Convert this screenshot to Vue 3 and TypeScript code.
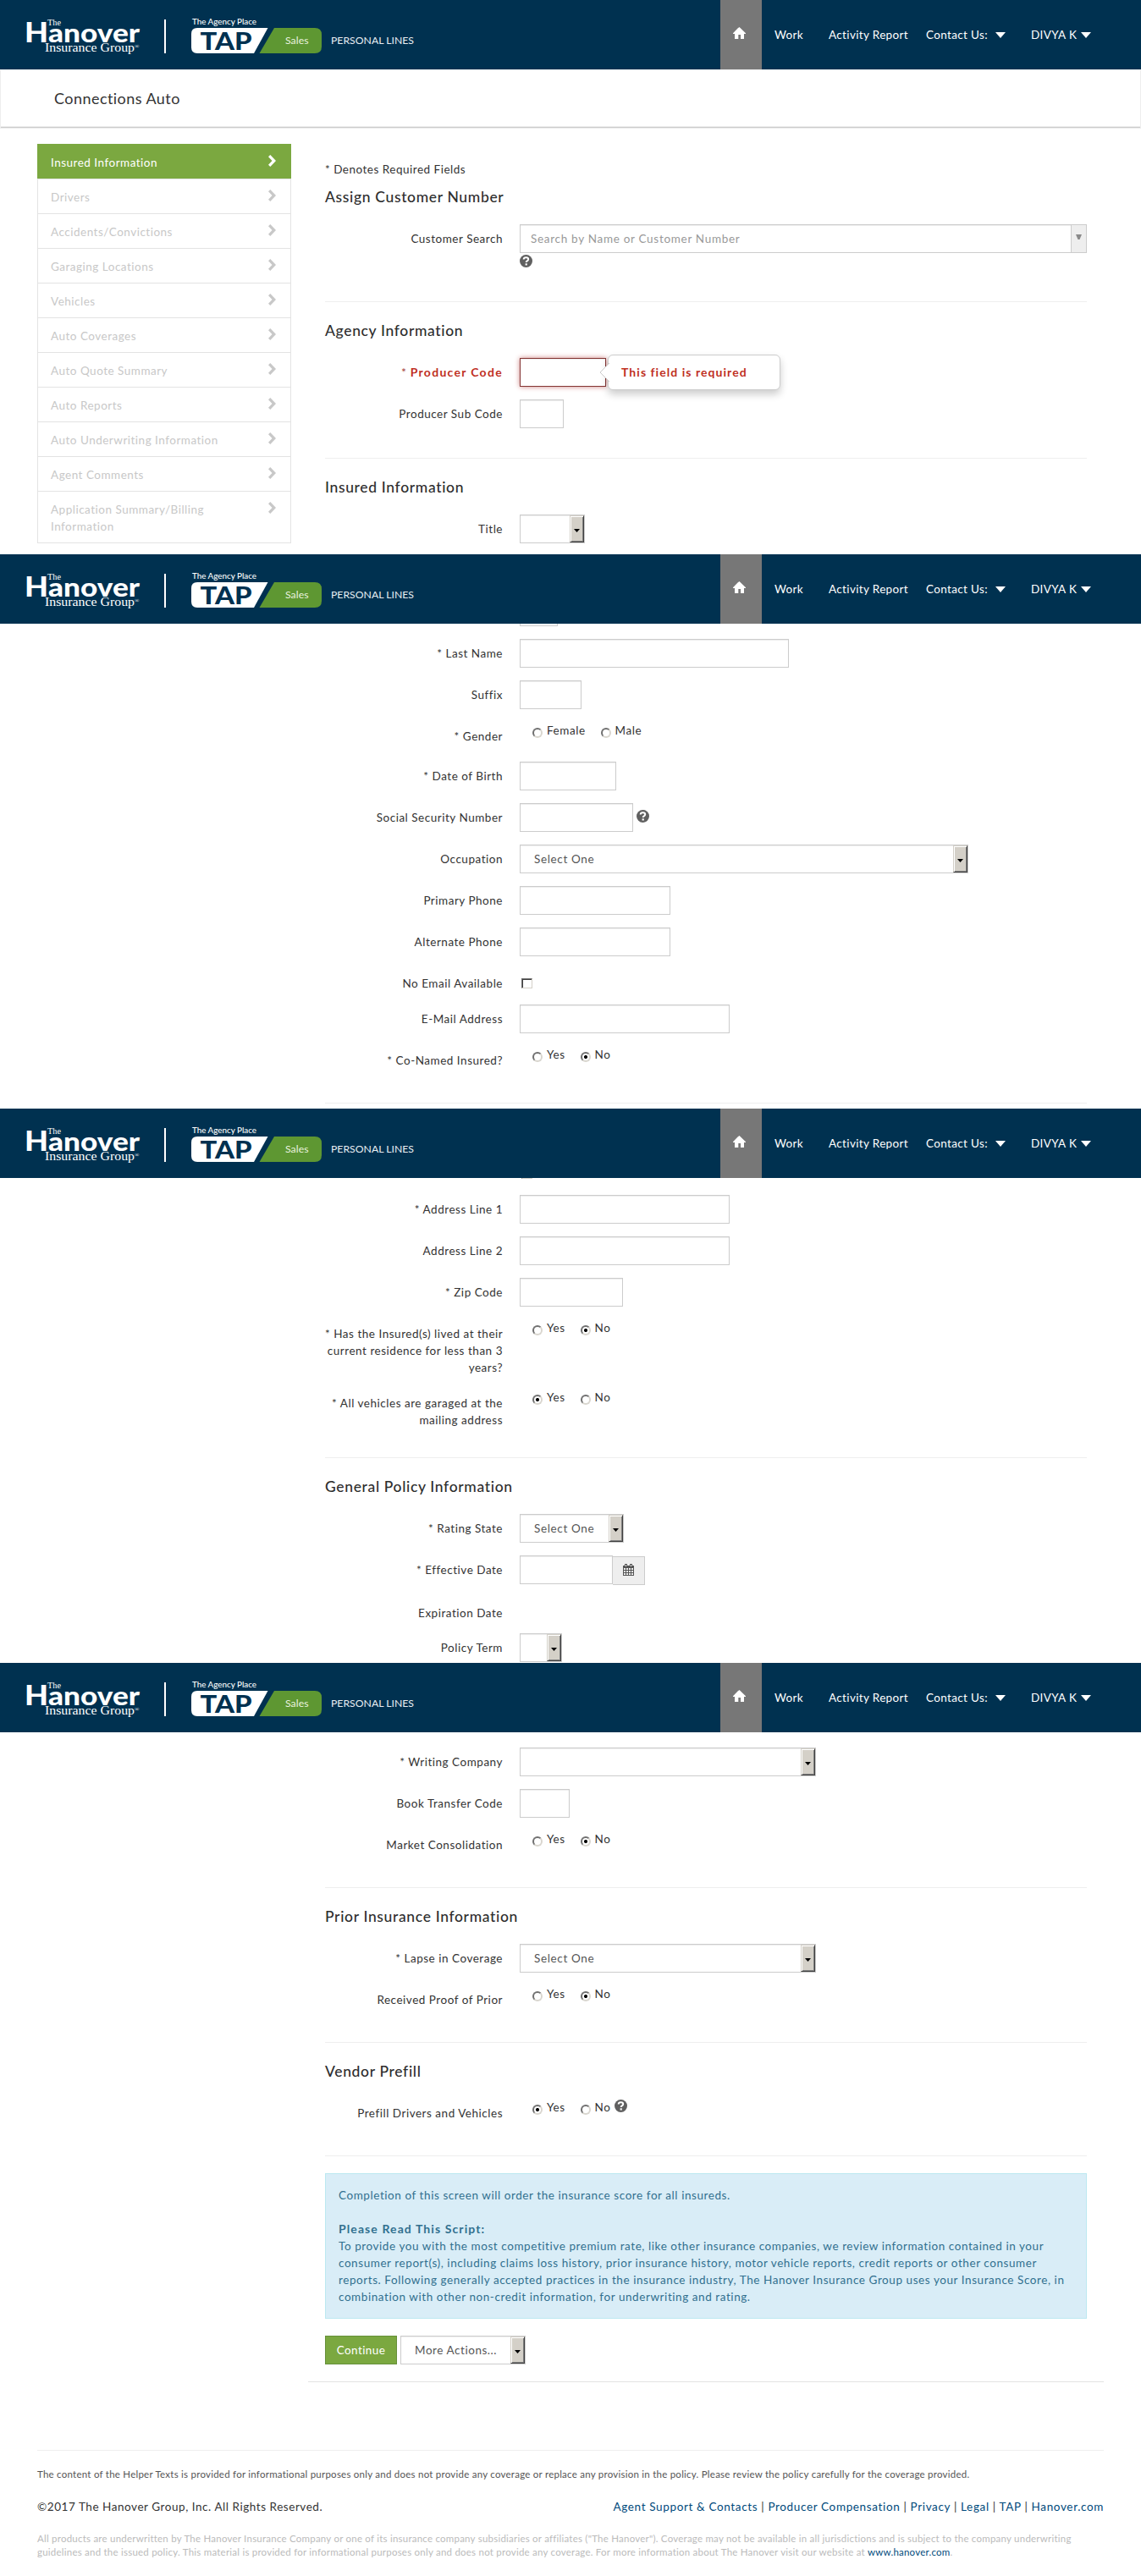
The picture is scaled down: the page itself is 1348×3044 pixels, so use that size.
<script setup lang="ts">
interface Option {
  text: string
  on?: boolean
}

interface Row {
  label?: string
  required?: boolean
  h: number
  kind: 'input' | 'select' | 'radio' | 'check' | 'search' | 'date' | 'none'
  w?: number
  value?: string
  options?: Option[]
  help?: boolean
  error?: string
}

interface Section {
  title?: string
  rows: Row[]
  rule?: boolean
}

interface Screen {
  name: string
  sections: Section[]
}

const steps: string[] = [
  'Insured Information',
  'Drivers',
  'Accidents/Convictions',
  'Garaging Locations',
  'Vehicles',
  'Auto Coverages',
  'Auto Quote Summary',
  'Auto Reports',
  'Auto Underwriting Information',
  'Agent Comments',
  'Application Summary/Billing\nInformation',
]

const yesNo = (yes: boolean): Option[] => [
  { text: 'Yes', on: yes },
  { text: 'No', on: !yes },
]

const screens: Screen[] = [
  {
    name: 'first',
    sections: [
      {
        title: 'Assign Customer Number',
        rule: true,
        rows: [{ label: 'Customer Search', h: 71, kind: 'search', w: 670, value: 'Search by Name or Customer Number', help: true }],
      },
      {
        title: 'Agency Information',
        rule: true,
        rows: [
          { label: 'Producer Code', required: true, h: 49, kind: 'input', w: 102, error: 'This field is required' },
          { label: 'Producer Sub Code', h: 49, kind: 'input', w: 52 },
        ],
      },
      {
        title: 'Insured Information',
        rows: [{ label: 'Title', h: 49, kind: 'select', w: 77 }],
      },
    ],
  },
  {
    name: 'second',
    sections: [
      {
        rule: true,
        rows: [
          { h: 49, kind: 'input', w: 45 },
          { label: 'Last Name', required: true, h: 49, kind: 'input', w: 318 },
          { label: 'Suffix', h: 49, kind: 'input', w: 73 },
          { label: 'Gender', required: true, h: 47, kind: 'radio', options: [{ text: 'Female' }, { text: 'Male' }] },
          { label: 'Date of Birth', required: true, h: 49, kind: 'input', w: 114 },
          { label: 'Social Security Number', h: 49, kind: 'input', w: 134, help: true },
          { label: 'Occupation', h: 49, kind: 'select', w: 530, value: 'Select One' },
          { label: 'Primary Phone', h: 49, kind: 'input', w: 178 },
          { label: 'Alternate Phone', h: 49, kind: 'input', w: 178 },
          { label: 'No Email Available', h: 42, kind: 'check' },
          { label: 'E-Mail Address', h: 49, kind: 'input', w: 248 },
          { label: 'Co-Named Insured?', required: true, h: 47, kind: 'radio', options: yesNo(false) },
        ],
      },
    ],
  },
  {
    name: 'third',
    sections: [
      {
        rule: true,
        rows: [
          { h: 42, kind: 'check' },
          { label: 'Address Line 1', required: true, h: 49, kind: 'input', w: 248 },
          { label: 'Address Line 2', h: 49, kind: 'input', w: 248 },
          { label: 'Zip Code', required: true, h: 49, kind: 'input', w: 122 },
          {
            label: 'Has the Insured(s) lived at their\ncurrent residence for less than 3\nyears?',
            required: true,
            h: 82,
            kind: 'radio',
            options: yesNo(false),
          },
          {
            label: 'All vehicles are garaged at the\nmailing address',
            required: true,
            h: 61,
            kind: 'radio',
            options: yesNo(true),
          },
        ],
      },
      {
        title: 'General Policy Information',
        rows: [
          { label: 'Rating State', required: true, h: 49, kind: 'select', w: 123, value: 'Select One' },
          { label: 'Effective Date', required: true, h: 51, kind: 'date', w: 110 },
          { label: 'Expiration Date', h: 41, kind: 'none' },
          { label: 'Policy Term', h: 34, kind: 'select', w: 50 },
        ],
      },
    ],
  },
  {
    name: 'fourth',
    sections: [
      {
        rule: true,
        rows: [
          { label: 'Writing Company', required: true, h: 49, kind: 'select', w: 350 },
          { label: 'Book Transfer Code', h: 49, kind: 'input', w: 59 },
          { label: 'Market Consolidation', h: 47, kind: 'radio', options: yesNo(false) },
        ],
      },
      {
        title: 'Prior Insurance Information',
        rule: true,
        rows: [
          { label: 'Lapse in Coverage', required: true, h: 49, kind: 'select', w: 350, value: 'Select One' },
          { label: 'Received Proof of Prior', h: 47, kind: 'radio', options: yesNo(false) },
        ],
      },
      {
        title: 'Vendor Prefill',
        rule: true,
        rows: [{ label: 'Prefill Drivers and Vehicles', h: 47, kind: 'radio', options: yesNo(true), help: true }],
      },
    ],
  },
]

const footerLinks: string[] = ['Agent Support & Contacts', 'Producer Compensation', 'Privacy', 'Legal', 'TAP', 'Hanover.com']
</script>

<template>
  <div class="page">
    <section v-for="screen in screens" :key="screen.name" class="screen" :class="screen.name">
      <header class="topbar">
        <svg class="brand" width="500" height="82" viewBox="0 0 500 82">
          <g fill="#fff">
            <text x="56" y="30" class="serif" font-size="10.5" textLength="16" lengthAdjust="spacingAndGlyphs">The</text>
            <text x="29" y="49.5" class="sans" textLength="136" lengthAdjust="spacingAndGlyphs"><tspan font-size="32" font-weight="900">H</tspan><tspan font-size="31" font-weight="900">anover</tspan></text>
            <text x="53" y="60.5" class="serif" font-size="14.5" textLength="106" lengthAdjust="spacingAndGlyphs">Insurance Group</text>
            <text x="159" y="57" class="serif" font-size="7">®</text>
            <rect x="194" y="23" width="2" height="40" />
            <text x="227" y="29" class="sans" font-size="10" font-weight="500" textLength="76" lengthAdjust="spacingAndGlyphs">The Agency Place</text>
            <path d="M233 33H316.500L300 63H233Q226 63 226 56V40Q226 33 233 33Z" />
          </g>
          <path d="M324 33H372Q380 33 380 41V55Q380 63 372 63H306.500Z" fill="#5e9732" />
          <text x="236.500" y="59" fill="#003150" class="sans" font-size="29" font-weight="900" textLength="61" lengthAdjust="spacingAndGlyphs">TAP</text>
          <text x="337" y="52" fill="#e9f2df" class="sans" font-size="12" textLength="27.500" lengthAdjust="spacingAndGlyphs">Sales</text>
          <text x="391" y="52" fill="#e8eef2" class="sans" font-size="11.500" textLength="98" lengthAdjust="spacingAndGlyphs">PERSONAL LINES</text>
        </svg>
        <nav class="nav">
          <a class="home">
            <svg width="15" height="14" viewBox="0 0 15 14"><path fill="#fff" d="M7.500 0L15 7.200V8H13V14H9V9H6.300V14H2V8H0V7.200L5.500 1.500Z" /></svg>
          </a>
          <a class="work">Work</a>
          <a class="activity">Activity Report</a>
          <a class="contact">Contact Us: <i class="caret"></i></a>
          <a class="user">DIVYA K <i class="caret"></i></a>
        </nav>
      </header>

      <div v-if="screen.name === 'first'" class="titlebar"><h1>Connections Auto</h1></div>

      <div class="body">
        <aside v-if="screen.name === 'first'" class="steps">
          <div v-for="(step, i) in steps" :key="step" class="step" :class="{ active: i === 0 }">
            <span>{{ step }}</span>
            <svg width="9" height="14" viewBox="0 0 9 14"><path fill="currentColor" d="M0 2.300L2.300 0L9 7L2.300 14L0 11.700L4.500 7Z" /></svg>
          </div>
        </aside>

        <main class="form">
          <p v-if="screen.name === 'first'" class="note">* Denotes Required Fields</p>
          <template v-for="(section, si) in screen.sections" :key="si">
            <h2 v-if="section.title">{{ section.title }}</h2>
            <div v-for="(row, ri) in section.rows" :key="ri" class="row" :class="{ invalid: row.error }" :style="{ height: row.h + 'px' }">
              <label class="label"><span v-if="row.required" class="star">* </span>{{ row.label }}</label>
              <div class="control" :class="'is-' + row.kind">
                <div v-if="row.kind === 'input'" class="box" :style="{ width: row.w + 'px' }">
                  <div v-if="row.error" class="tip">
                    <svg width="12" height="22" viewBox="0 0 12 22"><path d="M12 0L1 11L12 22" fill="#fff" stroke="#ccc" /></svg>
                    {{ row.error }}
                  </div>
                </div>
                <div v-else-if="row.kind === 'search'" class="box combo" :style="{ width: row.w + 'px' }">
                  <span>{{ row.value }}</span>
                  <b><svg width="7" height="6" viewBox="0 0 7 6"><path d="M0 0H7L4.500 6H2.500Z" fill="#8a8a8a" /></svg></b>
                </div>
                <div v-else-if="row.kind === 'select'" class="box select" :style="{ width: row.w + 'px' }">
                  <span>{{ row.value }}</span>
                  <b><svg width="7" height="4" viewBox="0 0 7 4"><path d="M0 0H7L3.500 4Z" /></svg></b>
                </div>
                <template v-else-if="row.kind === 'radio'">
                  <span v-for="o in row.options" :key="o.text" class="option"><i :class="{ on: o.on }"></i>{{ o.text }}</span>
                </template>
                <span v-else-if="row.kind === 'check'" class="checkbox"></span>
                <template v-else-if="row.kind === 'date'">
                  <div class="box" :style="{ width: row.w + 'px' }"></div>
                  <div class="addon">
                    <svg width="13" height="14" viewBox="0 0 13 14">
                      <path fill="#555" d="M0 2H2V0H5V2H8V0H11V2H13V14H0Z" />
                      <path fill="#eee" d="M1 5h2v2H1zM4 5h2v2H4zM7 5h2v2H7zM10 5h2v2h-2zM1 8h2v2H1zM4 8h2v2H4zM7 8h2v2H7zM10 8h2v2h-2zM1 11h2v2H1zM4 11h2v2H4zM7 11h2v2H7zM10 11h2v2h-2zM3 1h1v2H3zM9 1h1v2H9z" />
                    </svg>
                  </div>
                </template>
                <svg v-if="row.help" class="help" width="15" height="15" viewBox="0 0 15 15">
                  <circle cx="7.500" cy="7.500" r="7.500" fill="#606060" />
                  <path d="M4.700 5.600Q4.700 3.200 7.500 3.200Q10.200 3.200 10.200 5.300Q10.200 6.600 8.800 7.300Q7.700 7.900 7.700 9" fill="none" stroke="#fff" stroke-width="2" />
                  <rect x="6.600" y="10.300" width="2.200" height="2.200" fill="#fff" />
                </svg>
              </div>
            </div>
            <hr v-if="section.rule" />
          </template>

          <template v-if="screen.name === 'fourth'">
            <div class="alert">
              <p>Completion of this screen will order the insurance score for all insureds.</p>
              <p><strong>Please Read This Script:</strong></p>
              <p>To provide you with the most competitive premium rate, like other insurance companies, we review information contained in your<br />consumer report(s), including claims loss history, prior insurance history, motor vehicle reports, credit reports or other consumer<br />reports. Following generally accepted practices in the insurance industry, The Hanover Insurance Group uses your Insurance Score, in<br />combination with other non-credit information, for underwriting and rating.</p>
            </div>
            <div class="actions">
              <button type="button">Continue</button>
              <div class="box select more">
                <span>More Actions...</span>
                <b><svg width="7" height="4" viewBox="0 0 7 4"><path d="M0 0H7L3.500 4Z" /></svg></b>
              </div>
            </div>
          </template>
        </main>
      </div>

      <footer v-if="screen.name === 'fourth'" class="footer">
        <p class="helper">The content of the Helper Texts is provided for informational purposes only and does not provide any coverage or replace any provision in the policy. Please review the policy carefully for the coverage provided.</p>
        <div class="legal">
          <span class="copy">©2017 The Hanover Group, Inc. All Rights Reserved.</span>
          <span class="links"><template v-for="(link, i) in footerLinks" :key="link"><template v-if="i"> | </template><a>{{ link }}</a></template></span>
        </div>
        <p class="small">All products are underwritten by The Hanover Insurance Company or one of its insurance company subsidiaries or affiliates ("The Hanover"). Coverage may not be available in all jurisdictions and is subject to the company underwriting<br />guidelines and the issued policy. This material is provided for informational purposes only and does not provide any coverage. For more information about The Hanover visit our website at <a>www.hanover.com</a>.</p>
      </footer>
    </section>
  </div>
</template>

<style>
body {
  margin: 0;
  background: #fff;
}
</style>

<style scoped>
.page {
  width: 1348px;
  font: 13.5px/20px Lato, 'Liberation Sans', sans-serif;
  letter-spacing: 0.55px;
  color: #333;
}
.page * {
  box-sizing: border-box;
}
p,
h1,
h2 {
  margin: 0;
}
.screen {
  height: 655px;
  display: flex;
  flex-direction: column;
  overflow: hidden;
}
.fourth {
  height: 1079px;
}

/* top bar */
.topbar {
  flex: none;
  height: 82px;
  background: #003150;
  display: flex;
}
.brand {
  display: block;
}
.sans {
  font-family: Lato, sans-serif;
  letter-spacing: 0;
}
.serif {
  font-family: 'Liberation Serif', serif;
  letter-spacing: 0;
}
.nav {
  display: flex;
  margin-left: 351px;
  color: #fff;
  line-height: 82px;
  letter-spacing: 0.35px;
  white-space: nowrap;
}
.home {
  width: 49px;
  background: #777;
  padding: 32px 0 0 15px;
  margin-right: 15px;
}
.home svg {
  display: block;
}
.work {
  width: 64px;
}
.activity {
  width: 115px;
}
.contact {
  width: 124px;
  padding-right: 30px;
  display: flex;
  justify-content: space-between;
}
.user {
  width: 71px;
  display: flex;
  justify-content: space-between;
}
.caret {
  align-self: center;
  border: 6px solid transparent;
  border-top: 7px solid #fff;
  border-bottom: 0;
}

.titlebar {
  flex: none;
  height: 70px;
  border: 1px solid #eee;
  border-bottom: 0;
  box-shadow: inset 0 -1px #eee, inset 0 -2px #ccc, inset 0 -3px #eee;
  padding: 20px 0 0 63px;
}
h1 {
  font-size: 18px;
  line-height: 26px;
  font-weight: 400;
  letter-spacing: 0.45px;
}

.body {
  display: flex;
  padding-left: 384px;
  overflow: hidden;
}
.first .body {
  padding: 18px 0 0 44px;
  gap: 40px;
}
.second .form {
  margin-top: -31px;
}
.third .form {
  margin-top: -22px;
}
.fourth .form {
  padding-top: 18px;
}

/* wizard steps */
.steps {
  width: 300px;
  flex: none;
}
.step {
  height: 41px;
  border: 1px solid #e3e3e3;
  border-bottom: 0;
  color: #c8c8c8;
  padding: 11px 15px 0;
  display: flex;
  justify-content: space-between;
  align-items: flex-start;
  letter-spacing: 0.5px;
  white-space: pre-line;
}
.step svg {
  margin: 1px 2px 0 0;
}
.step:last-child {
  height: 62px;
  border-bottom: 1px solid #e3e3e3;
}
.step.active {
  background: #7ba840;
  border-color: #7ba840;
  color: #fff;
}

/* form */
.form {
  width: 900px;
}
.note {
  padding-top: 20px;
  letter-spacing: 0.5px;
}
h2 {
  font-size: 17.5px;
  line-height: 24px;
  font-weight: 500;
  letter-spacing: 0.65px;
  padding: 22px 0 20px;
  color: #2e2e2e;
}
.note + h2 {
  padding: 11px 0 20px;
}
.row {
  display: flex;
  gap: 20px;
}
.label {
  width: 210px;
  flex: none;
  padding-top: 7px;
  display: block;
  text-align: right;
  letter-spacing: 0.52px;
  white-space: pre;
}
.control {
  display: flex;
  align-items: flex-start;
}
.box {
  height: 34px;
  background: #fff;
  border: 1px solid #ccc;
  box-shadow: inset 0 1px 1px rgba(0, 0, 0, 0.075);
}
.is-search {
  flex-direction: column;
}
.combo {
  display: flex;
  justify-content: space-between;
  color: #999;
  line-height: 32px;
  padding-left: 12px;
  letter-spacing: 0.7px;
}
.combo b {
  width: 18px;
  background: #eee;
  border-left: 1px solid #ccc;
  padding: 11px 0 0 5px;
  line-height: 0;
}
.help {
  margin: 8px 0 0 4px;
}
.is-search .help {
  margin: 2px 0 0;
}
.is-radio .help {
  margin: 1px 0 0 5px;
}
.select {
  display: flex;
  justify-content: space-between;
  color: #555;
  line-height: 32px;
  padding-left: 16px;
  letter-spacing: 0.65px;
}
.select b {
  width: 17px;
  background: #d4d0c8;
  border: 1px solid;
  border-color: #d4d0c8 #404040 #404040 #d4d0c8;
  box-shadow: inset 1px 1px #fff, inset -1px -1px #808080;
  padding: 14px 0 0 4px;
  line-height: 0;
  color: #000;
}
.is-radio {
  padding-left: 15px;
}
.option {
  display: flex;
  line-height: 21px;
  margin-right: 18px;
}
.option:last-of-type {
  margin-right: 0;
}
.option i {
  width: 12px;
  height: 12px;
  margin: 7px 5px 0 0;
  border: 2px solid;
  border-color: #707070 #d9d6cf #d9d6cf #707070;
  border-radius: 50%;
}
.option i.on {
  background: radial-gradient(circle, #000 0 1.8px, transparent 2.3px);
}
.checkbox {
  width: 13px;
  height: 12px;
  margin: 11px 0 0 2px;
  border: 1px solid;
  border-color: #707070 #d4d0c8 #d4d0c8 #707070;
  box-shadow: inset 1px 1px #404040;
}
.addon {
  width: 38px;
  height: 34px;
  margin-top: 1px;
  background: #eee;
  border: 1px solid #ccc;
  border-left: 0;
  padding: 8px 0 0 12px;
}
.addon svg {
  display: block;
}
.invalid .label {
  font-size: 14px;
  font-weight: 700;
  letter-spacing: 1.3px;
  color: #c0301f;
}
.invalid .star {
  font-weight: 400;
  letter-spacing: 0.5px;
  color: #a94442;
}
.invalid .box {
  position: relative;
  border-color: #843534;
  box-shadow: inset 0 1px 1px rgba(0, 0, 0, 0.075), 0 0 6px #ce8483;
}
.tip {
  position: absolute;
  left: 103px;
  top: -5px;
  width: 204px;
  height: 42px;
  padding-left: 15px;
  font-size: 14px;
  line-height: 40px;
  letter-spacing: 1.05px;
  background: #fff;
  border: 1px solid #ccc;
  border-radius: 6px;
  box-shadow: 0 5px 10px rgba(0, 0, 0, 0.2);
  font-weight: 700;
  color: #c0301f;
  white-space: nowrap;
}
.tip svg {
  position: absolute;
  left: -11px;
  top: 9px;
}
hr {
  height: 1px;
  border: 0;
  background: #eee;
  margin: 20px 0 0;
}

.alert {
  height: 172px;
  margin-top: 20px;
  padding: 15px;
  background: #d9edf7;
  border: 1px solid #bce8f1;
  color: #31708f;
  letter-spacing: 0.57px;
  white-space: nowrap;
}
.alert p:first-child {
  margin-bottom: 20px;
}
.alert strong {
  font-size: 14px;
  letter-spacing: 1.1px;
}
.actions {
  display: flex;
  gap: 4px;
  margin: 20px -20px 0;
  padding: 0 20px 20px;
  border-bottom: 1px solid #e3e3e3;
}
.actions button {
  width: 85px;
  height: 34px;
  padding: 0;
  background: #7ba840;
  border: 1px solid #66903a;
  color: #fff;
  font: inherit;
  letter-spacing: 0.4px;
}
.more {
  width: 148px;
  letter-spacing: 0.55px;
}

/* footer */
.fourth .body {
  overflow: visible;
}
.footer {
  margin: 80px 44px 0;
  border-top: 1px solid #eee;
}
.helper {
  padding-top: 19px;
  font-size: 11.5px;
  line-height: 18px;
  letter-spacing: 0.245px;
  color: #555;
  white-space: nowrap;
}
.legal {
  display: flex;
  justify-content: space-between;
  margin-top: 19px;
}
.links {
  letter-spacing: 0.64px;
}
.footer a {
  color: #004a7c;
}
.small {
  margin-top: 20px;
  font-size: 11.5px;
  line-height: 16px;
  letter-spacing: 0.23px;
  color: #bbb;
  white-space: nowrap;
}
</style>
